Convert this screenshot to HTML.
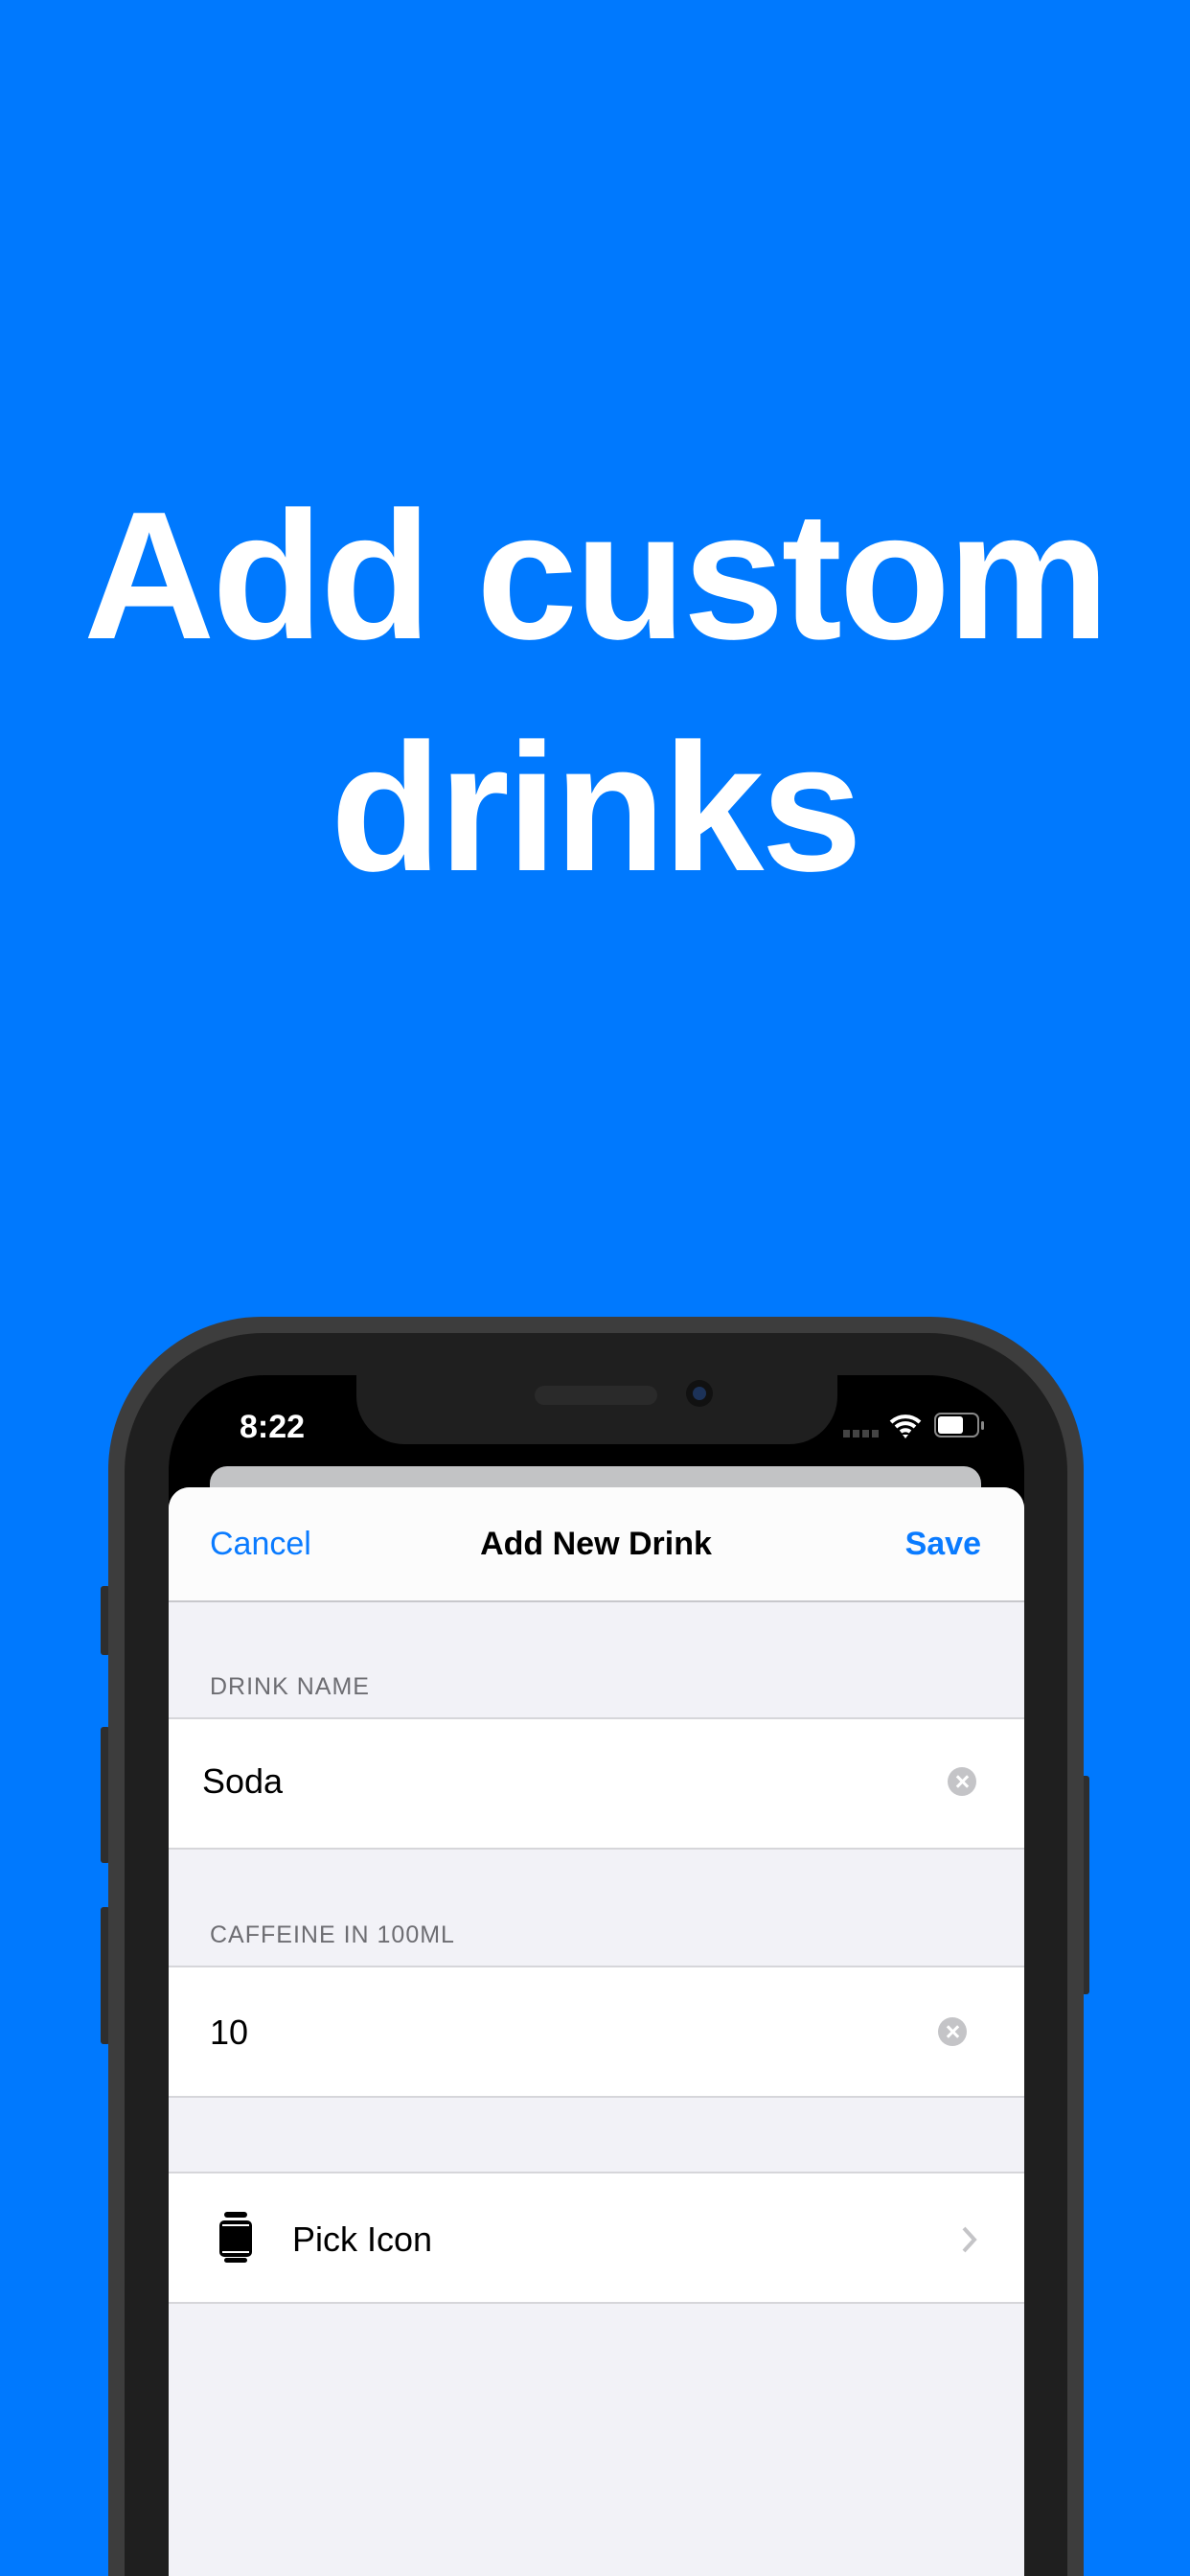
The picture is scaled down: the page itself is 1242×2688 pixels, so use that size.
<!DOCTYPE html>
<html><head><meta charset="utf-8"><style>
*{margin:0;padding:0;box-sizing:border-box}
html,body{width:1242px;height:2688px;overflow:hidden}
body{font-family:"Liberation Sans",sans-serif}
#w{position:relative;width:1242px;height:2688px;overflow:hidden;background:#0079FE}
.h{position:absolute;left:0;width:1242px;text-align:center;color:#fff;font-weight:bold;font-size:190px;letter-spacing:-3px}
.abs{position:absolute}
.lbl{position:absolute;left:219px;font-size:25px;color:#6d6d72;letter-spacing:1px}
.row{position:absolute;left:176px;width:893px;background:#fff;border-top:2px solid #d6d6da;border-bottom:2px solid #d6d6da}
.clr{position:absolute;width:30px;height:30px;border-radius:50%;background:#c4c4c7}
.clr:before,.clr:after{content:"";position:absolute;left:14px;top:7px;width:3px;height:16px;background:#fff;transform:rotate(45deg)}
.clr:after{transform:rotate(-45deg)}
</style></head><body><div id="w">
<div class="h" style="top:492px">Add custom</div>
<div class="h" style="top:734px">drinks</div>

<div class="abs" style="left:105px;top:1655px;width:10px;height:72px;background:#2e2e2e;border-radius:3px"></div>
<div class="abs" style="left:105px;top:1802px;width:10px;height:142px;background:#2e2e2e;border-radius:3px"></div>
<div class="abs" style="left:105px;top:1990px;width:10px;height:143px;background:#2e2e2e;border-radius:3px"></div>
<div class="abs" style="left:1127px;top:1853px;width:10px;height:228px;background:#2e2e2e;border-radius:3px"></div>

<div class="abs" style="left:113px;top:1374px;width:1018px;height:1314px;background:#3d3d3d;border-radius:160px 160px 0 0"></div>
<div class="abs" style="left:130px;top:1391px;width:984px;height:1297px;background:#1f1f1f;border-radius:145px 145px 0 0"></div>
<div class="abs" style="left:176px;top:1435px;width:893px;height:1253px;background:#000;border-radius:100px 100px 0 0"></div>
<div class="abs" style="left:372px;top:1420px;width:502px;height:87px;background:#1f1f1f;border-radius:0 0 50px 50px"></div>
<div class="abs" style="left:558px;top:1446px;width:128px;height:20px;background:#2a2a2a;border-radius:10px"></div>
<div class="abs" style="left:716px;top:1440px;width:28px;height:28px;background:#111;border-radius:50%"></div>
<div class="abs" style="left:723px;top:1447px;width:14px;height:14px;background:#1c3258;border-radius:50%"></div>
<div class="abs" style="left:250px;top:1470px;color:#fff;font-size:34px;font-weight:bold">8:22</div>
<div class="abs" style="left:880px;top:1492px;width:40px;height:8px;background:repeating-linear-gradient(90deg,#444 0 7px,transparent 7px 10px)"></div>
<svg class="abs" style="left:928px;top:1474px" width="34" height="28" viewBox="0 0 34 28"><path d="M2 10a22 22 0 0 1 30 0M7 15a15 15 0 0 1 20 0M12 20a8 8 0 0 1 10 0" stroke="#fff" stroke-width="4" fill="none"/><path d="M14 23l3 4 3-4z" fill="#fff"/></svg>
<div class="abs" style="left:975px;top:1474px;width:47px;height:26px;border:2px solid #888;border-radius:7px"></div>
<div class="abs" style="left:979px;top:1478px;width:26px;height:18px;background:#fff;border-radius:3px"></div>
<div class="abs" style="left:1024px;top:1483px;width:3px;height:9px;background:#888;border-radius:2px"></div>

<div class="abs" style="left:219px;top:1530px;width:805px;height:60px;background:#c2c3c5;border-radius:18px 18px 0 0"></div>
<div class="abs" style="left:176px;top:1552px;width:893px;height:1136px;background:#f2f2f7;border-radius:22px 22px 0 0;overflow:hidden">
 <div style="height:120px;background:#fcfcfc;border-bottom:2px solid #c8c8cc"></div>
</div>
<div class="abs" style="left:219px;top:1592px;color:#0a7bff;font-size:34px">Cancel</div>
<div class="abs" style="left:422px;top:1592px;width:400px;text-align:center;color:#000;font-size:34px;font-weight:bold">Add New Drink</div>
<div class="abs" style="left:924px;top:1592px;width:100px;text-align:right;color:#0a7bff;font-size:34px;font-weight:bold">Save</div>

<div class="lbl" style="top:1746px">DRINK NAME</div>
<div class="row" style="top:1792px;height:138px"></div>
<div class="abs" style="left:211px;top:1838px;font-size:36px;color:#000">Soda</div>
<div class="clr" style="left:989px;top:1844px"></div>

<div class="lbl" style="top:2005px">CAFFEINE IN 100ML</div>
<div class="row" style="top:2051px;height:138px"></div>
<div class="abs" style="left:219px;top:2100px;font-size:36px;color:#000">10</div>
<div class="clr" style="left:979px;top:2105px"></div>

<div class="row" style="top:2266px;height:138px"></div>
<svg class="abs" style="left:229px;top:2308px" width="34" height="54" viewBox="0 0 34 54"><rect x="5" y="0" width="24" height="6" rx="3"/><rect x="0" y="9" width="34" height="38" rx="5"/><rect x="3" y="13" width="28" height="2" fill="#fff"/><rect x="3" y="41" width="28" height="2" fill="#fff"/><rect x="5" y="48" width="24" height="5" rx="2.5"/></svg>
<div class="abs" style="left:305px;top:2316px;font-size:36px;color:#000">Pick Icon</div>
<svg class="abs" style="left:1003px;top:2322px" width="18" height="30" viewBox="0 0 18 30"><path d="M3 3l11 12-11 12" stroke="#c4c4c7" stroke-width="4" fill="none"/></svg>
</div></body></html>
